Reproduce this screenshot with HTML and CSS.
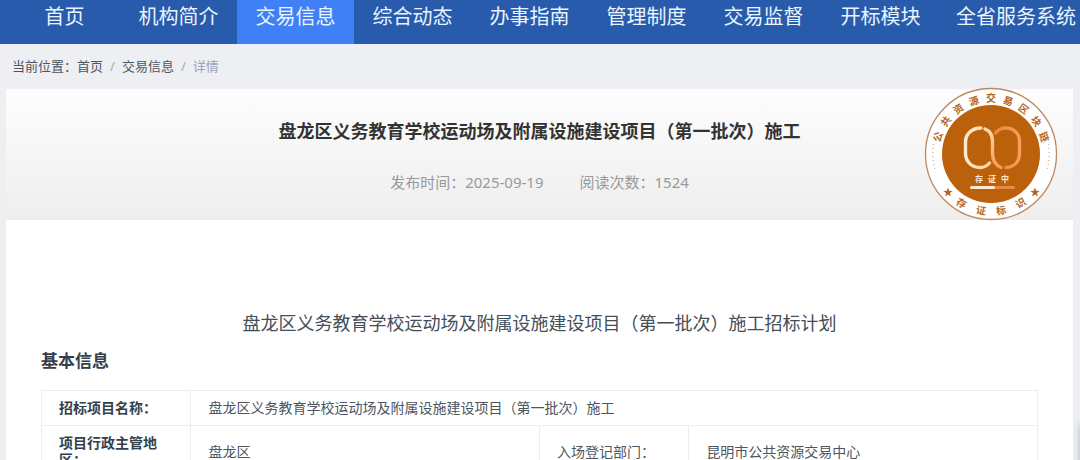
FILE: index.html
```html
<!DOCTYPE html>
<html lang="zh-CN">
  <head>
    <meta charset="UTF-8" />
    <meta name="viewport" content="width=device-width, initial-scale=1.0" />
    <title>交易信息</title>
    <link rel="stylesheet" href="styles.css">
  </head>
  <body>
    <nav class="nav">
      <a class="nav-item nav-home" href="#">首页</a>
      <a class="nav-item" href="#">机构简介</a>
      <a class="nav-item active" href="#">交易信息</a>
      <a class="nav-item" href="#">综合动态</a>
      <a class="nav-item" href="#">办事指南</a>
      <a class="nav-item" href="#">管理制度</a>
      <a class="nav-item" href="#">交易监督</a>
      <a class="nav-item" href="#">开标模块</a>
      <a class="nav-item nav-wide" href="#">全省服务系统</a>
    </nav>
    <div class="breadcrumb">
      <span>当前位置：</span>
      <a href="#">首页</a>
      <span class="sep">/</span>
      <a href="#">交易信息</a>
      <span class="sep">/</span>
      <span class="current">详情</span>
    </div>
    <main class="card">
      <header class="card-header">
        <h1>盘龙区义务教育学校运动场及附属设施建设项目（第一批次）施工</h1>
        <div class="meta">
          <span>发布时间：2025-09-19</span>
          <span>阅读次数：1524</span>
        </div>
        <svg class="seal" viewBox="-67 -67 134 134">
          <defs>
            <linearGradient id="leftLoop" gradientUnits="userSpaceOnUse" x1="-26" y1="0" x2="0" y2="0">
              <stop offset="0" stop-color="#ffe9d0" />
              <stop offset="1" stop-color="#ffd0a0" />
            </linearGradient>
            <linearGradient id="midLoop" gradientUnits="userSpaceOnUse" x1="0" y1="-26" x2="0" y2="14">
              <stop offset="0" stop-color="#ffddb8" />
              <stop offset="1" stop-color="#f39a4c" />
            </linearGradient>
            <linearGradient id="rightLoop" gradientUnits="userSpaceOnUse" x1="4" y1="0" x2="30" y2="0">
              <stop offset="0" stop-color="#e8873a" />
              <stop offset="1" stop-color="#f79f58" />
            </linearGradient>
          </defs>
          <circle r="65.5" fill="#fff" stroke="#bd8760" stroke-width="1.3" />
          <circle r="49" fill="#bb600b" />
          <!-- ring text -->
          <g class="seal-text">
            <text transform="rotate(-72) translate(0 -52)">公</text>
            <text transform="rotate(-54) translate(0 -52)">共</text>
            <text transform="rotate(-36) translate(0 -52)">资</text>
            <text transform="rotate(-18) translate(0 -52)">源</text>
            <text transform="translate(0 -52)">交</text>
            <text transform="rotate(18) translate(0 -52)">易</text>
            <text transform="rotate(36) translate(0 -52)">区</text>
            <text transform="rotate(54) translate(0 -52)">块</text>
            <text transform="rotate(72) translate(0 -52)">链</text>
            <text transform="rotate(31) translate(0 61)">存</text>
            <text transform="rotate(10) translate(0 61)">证</text>
            <text transform="rotate(-10) translate(0 61)">标</text>
            <text transform="rotate(-31) translate(0 61)">识</text>
          </g>
          <g fill="#b5651d">
            <path id="star" d="M-43 33.5l1.2 3.3 3.5.1-2.8 2.1 1 3.4-2.9-2-2.9 2 1-3.4-2.8-2.1 3.5-.1z" />
            <use href="#star" x="87" />
          </g>
          <g fill="none" stroke="#b08a70" stroke-dasharray="1 3">
            <path d="M-57.5 -10A58 58 0 0 0 -55.5 17" />
            <path d="M57.5 -10A58 58 0 0 1 55.5 17" />
          </g>
          <!-- two interlocked loops -->
          <g fill="none" stroke-width="3.4" stroke-linecap="round">
            <path stroke="url(#rightLoop)" d="M4.500 -21C7 -24.500 10 -26 15 -26C23 -26 28.500 -20 28.500 -13V-1C28.500 8 23 13 15 13.500" />
            <path stroke="url(#leftLoop)" d="M-10 -26C-19 -26 -25.500 -20 -25.500 -12V-1C-25.500 8 -19 13.500 -11 13.500C-7 13.500 -4 12 -1.500 9" />
            <path stroke="url(#midLoop)" d="M-6 -25C-1 -23 1.500 -19 1.500 -13V-1C1.500 6 4 11 10 13.500" />
          </g>
          <g class="seal-label">
            <text x="-12" y="28">存</text>
            <text x="1" y="28">证</text>
            <text x="14" y="28">中</text>
          </g>
          <rect x="-21" y="32" width="45" height="3" rx="1.5" fill="#e58b41" />
          <rect x="-21" y="32" width="25" height="3" rx="1.5" fill="#ffe9d0" />
        </svg>
      </header>
      <section class="content">
        <h2>盘龙区义务教育学校运动场及附属设施建设项目（第一批次）施工招标计划</h2>
        <h3>基本信息</h3>
        <table class="info">
          <colgroup>
            <col class="col-label">
            <col class="col-value">
            <col class="col-label">
            <col class="col-value">
          </colgroup>
          <tr>
            <th>招标项目名称：</th>
            <td colspan="3">盘龙区义务教育学校运动场及附属设施建设项目（第一批次）施工</td>
          </tr>
          <tr>
            <th>项目行政主管地区：</th>
            <td>盘龙区</td>
            <td>入场登记部门：</td>
            <td>昆明市公共资源交易中心</td>
          </tr>
        </table>
      </section>
    </main>
    <aside class="side-tools"></aside>
  </body>
</html>
```
FILE: styles.css
```css
body {
  margin: 0;
  background: #edeff2;
  color: #4c5560;
  font-family: "Noto Sans", "Noto Sans CJK SC", sans-serif;
  font-size: 14px;
}

a {
  color: inherit;
  text-decoration: none;
}

.nav {
  display: flex;
  height: 44px;
  padding-left: 9px;
  background: #295bac;
  color: #e8f4ff;
  font-size: 20px;
  line-height: 34px;
  overflow: hidden;
}

.nav-item {
  flex: 0 0 117px;
  text-align: center;
}

.nav-home {
  flex-basis: 111px;
}

.nav-wide {
  flex-basis: 154px;
}

.nav .active {
  background: #3f80f6;
}

.breadcrumb {
  display: flex;
  padding: 0 12px;
  font-size: 13px;
  line-height: 45px;
}

.sep {
  margin: 0 7px;
  color: #a5abb3;
}

.current {
  color: #99a4bd;
}

.card {
  margin: 0 7px 0 6px;
  background: #fff;
}

.card-header {
  position: relative;
  box-sizing: border-box;
  height: 131px;
  padding-top: 28px;
  background: linear-gradient(#fdfdfd, #eee);
  text-align: center;
}

h1 {
  margin: 0;
  color: #333;
  font-size: 18px;
  line-height: 28px;
}

.meta {
  display: flex;
  justify-content: center;
  gap: 36px;
  margin-top: 24px;
  color: #999;
  font-size: 15px;
  line-height: 26px;
}

/* certification seal over the corner of the header */
.seal {
  position: absolute;
  top: -2px;
  right: 15px;
  width: 134px;
  height: 134px;
}

.seal-text {
  fill: #b5651d;
  font-size: 10px;
  font-weight: bold;
  text-anchor: middle;
}

.seal-label {
  fill: #ffe9d0;
  font-size: 8px;
  font-weight: bold;
  text-anchor: middle;
}

.content {
  padding: 90px 35px 0;
}

h2 {
  margin: 0;
  color: #444e59;
  font-size: 18px;
  font-weight: normal;
  line-height: 26px;
  text-align: center;
}

h3 {
  margin: 12px 0 16px;
  color: #343f4b;
  font-size: 17px;
  line-height: 26px;
}

.info {
  width: 100%;
  border-collapse: collapse;
  table-layout: fixed;
}

.col-label {
  width: 15%;
}

.col-value {
  width: 35%;
}

.info th,
.info td {
  border: 1px solid #ebeef0;
  padding: 8px 17px 9px;
  line-height: 17px;
  text-align: left;
}

.info th {
  padding-right: 28px;
  color: #343f4b;
}

/* floating toolbar, parked off the right edge */
.side-tools {
  position: fixed;
  right: -40px;
  bottom: -60px;
  width: 38px;
  height: 95px;
  box-shadow: 0 0 8px #8a97a5;
}
```
